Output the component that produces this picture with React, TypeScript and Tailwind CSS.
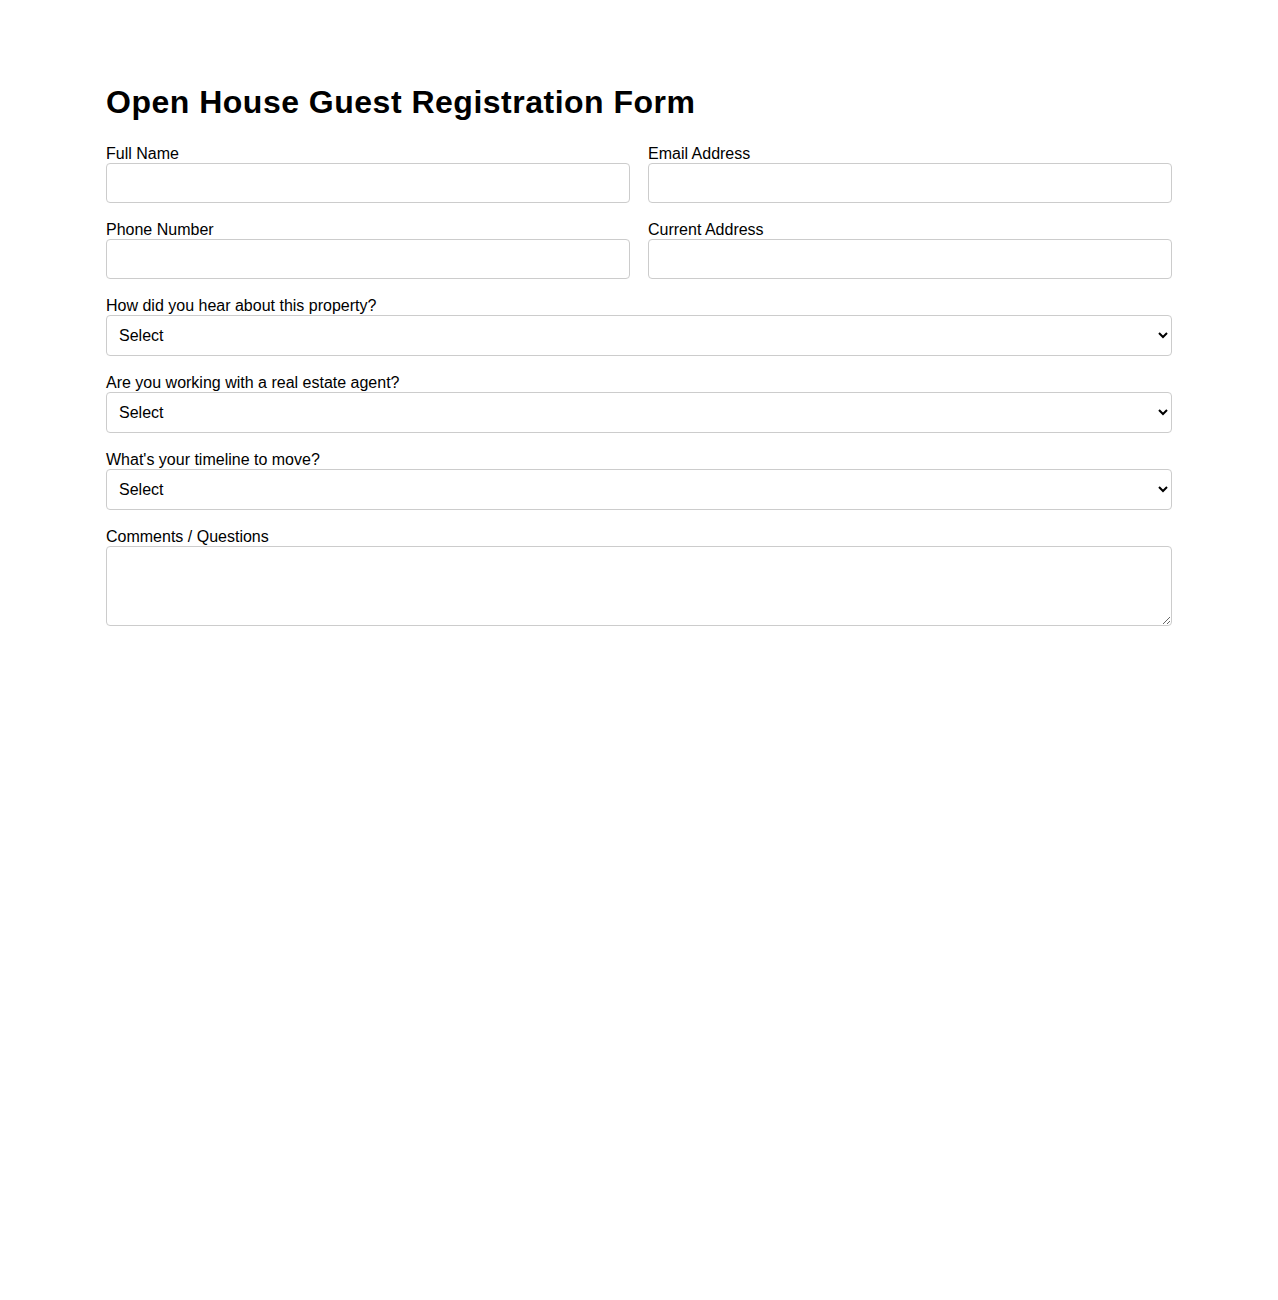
import React from "react";

const fieldClass =
  "block w-full h-10 rounded border border-[#cccccc] bg-white px-[10px] text-base text-black outline-none";

const selectClass =
  "block w-full h-[41px] rounded border border-[#cccccc] bg-white pl-2 pr-1 text-base text-black outline-none";

const Label = ({ children }: { children: React.ReactNode }) => (
  <label className="block text-base leading-[18px] text-black">{children}</label>
);

const TextField = ({ label, type = "text" }: { label: string; type?: string }) => (
  <div>
    <Label>{label}</Label>
    <input type={type} className={fieldClass} />
  </div>
);

const SelectField = ({ label }: { label: string }) => (
  <div>
    <Label>{label}</Label>
    <select className={selectClass} defaultValue="">
      <option value="">Select</option>
    </select>
  </div>
);

export default function App() {
  return (
    <div className="min-h-[1300px] bg-white font-['Liberation_Sans',Arial,sans-serif] text-black">
      <div className="mx-auto w-[1066px] pt-[84px]">
        <h1 className="mb-[24px] text-[32px] font-bold leading-[37px] tracking-[0.5px]">
          Open House Guest Registration Form
        </h1>
        <form className="flex flex-col gap-[18px]">
          <div className="grid grid-cols-2 gap-x-[18px] gap-y-[18px]">
            <TextField label="Full Name" />
            <TextField label="Email Address" type="email" />
            <TextField label="Phone Number" type="tel" />
            <TextField label="Current Address" />
          </div>
          <SelectField label="How did you hear about this property?" />
          <SelectField label="Are you working with a real estate agent?" />
          <SelectField label="What's your timeline to move?" />
          <div>
            <Label>Comments / Questions</Label>
            <textarea className="block h-20 w-full rounded border border-[#cccccc] bg-white px-[10px] py-2 text-base outline-none" />
          </div>
        </form>
      </div>
    </div>
  );
}
